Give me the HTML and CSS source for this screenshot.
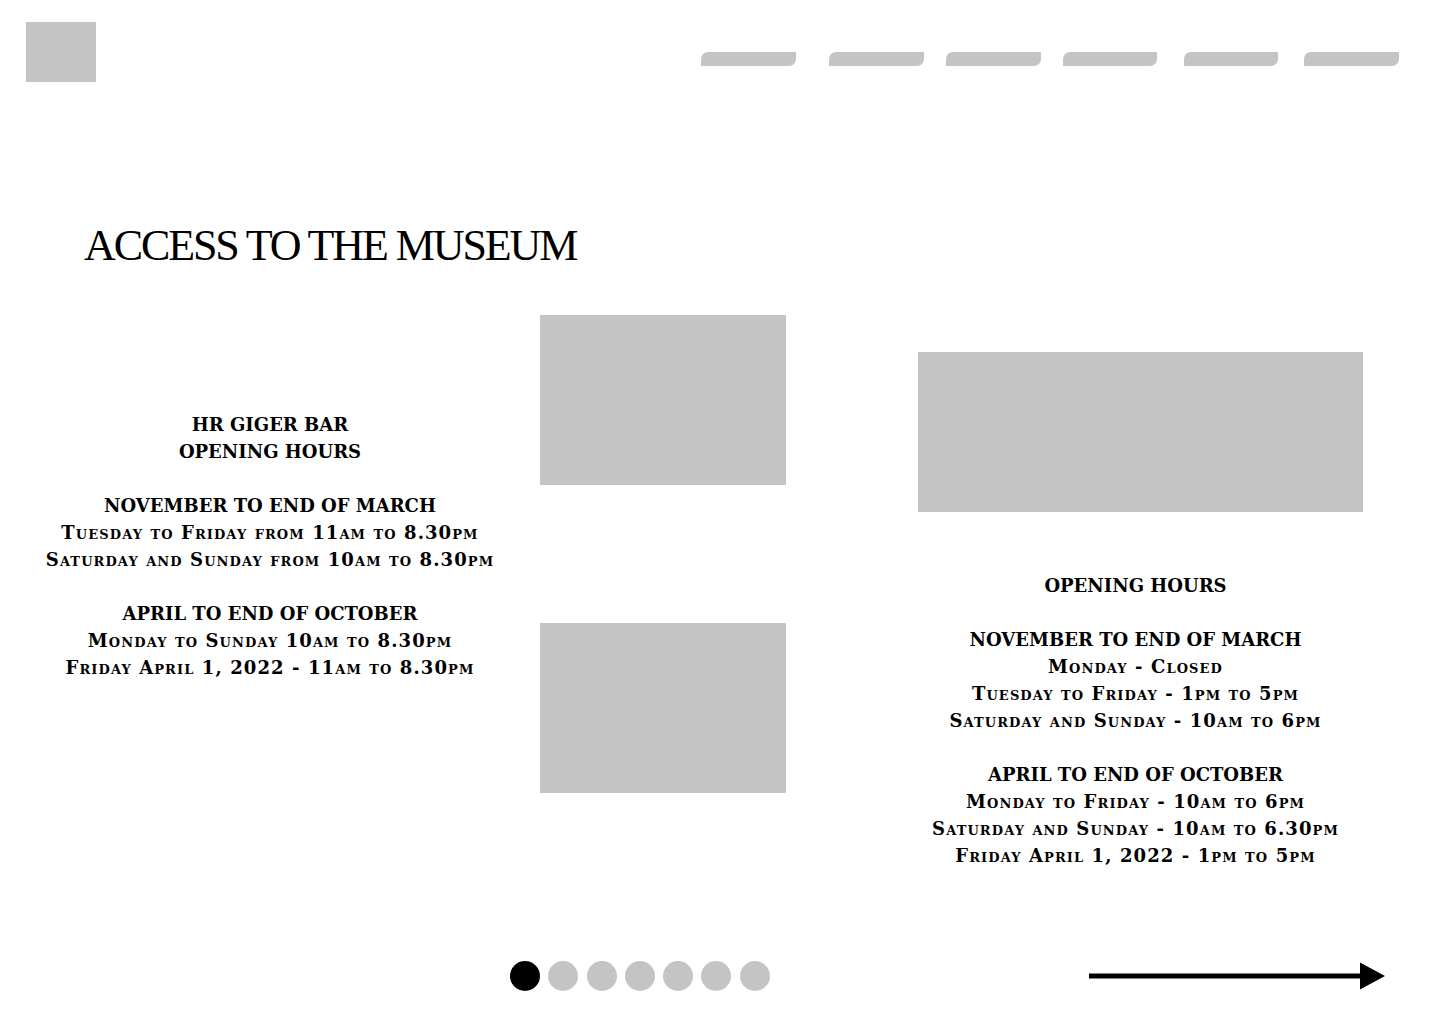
FILE: index.html
```html
<!DOCTYPE html>
<html lang="en">
<head>
<meta charset="utf-8">
<title>Access to the Museum</title>
<link rel="stylesheet" href="styles.css">
</head>
<body>
<header class="top">
  <div class="logo"></div>
  <nav class="nav">
    <span class="pill"></span>
    <span class="pill p2"></span>
    <span class="pill p3"></span>
    <span class="pill p4"></span>
    <span class="pill p5"></span>
    <span class="pill p6"></span>
  </nav>
</header>
<main class="main">
  <h1 class="title">ACCESS TO THE MUSEUM</h1>
  <div class="cols">
    <section class="col-left">
      <p class="hours"><span class="line">HR GIGER BAR</span><span class="line">OPENING HOURS</span></p>
      <p class="hours"><span class="line">NOVEMBER TO END OF MARCH</span><span class="line sc">Tuesday to Friday from 11am to 8.30pm</span><span class="line sc">Saturday and Sunday from 10am to 8.30pm</span></p>
      <p class="hours"><span class="line">APRIL TO END OF OCTOBER</span><span class="line sc">Monday to Sunday 10am to 8.30pm</span><span class="line sc">Friday April 1, 2022 - 11am to 8.30pm</span></p>
    </section>
    <section class="col-mid">
      <div class="ph ph-small"></div>
      <div class="ph ph-small"></div>
    </section>
    <section class="col-right">
      <div class="ph ph-wide"></div>
      <p class="hours"><span class="line">OPENING HOURS</span></p>
      <p class="hours"><span class="line">NOVEMBER TO END OF MARCH</span><span class="line sc">Monday - Closed</span><span class="line sc">Tuesday to Friday - 1pm to 5pm</span><span class="line sc">Saturday and Sunday - 10am to 6pm</span></p>
      <p class="hours"><span class="line">APRIL TO END OF OCTOBER</span><span class="line sc">Monday to Friday - 10am to 6pm</span><span class="line sc">Saturday and Sunday - 10am to 6.30pm</span><span class="line sc">Friday April 1, 2022 - 1pm to 5pm</span></p>
    </section>
  </div>
  <div class="foot">
    <div class="dots">
      <span class="dot active"></span>
      <span class="dot"></span>
      <span class="dot"></span>
      <span class="dot"></span>
      <span class="dot"></span>
      <span class="dot"></span>
      <span class="dot"></span>
    </div>
    <svg class="arrow" width="297" height="28" viewBox="0 0 297 28">
      <rect x="0" y="11.5" width="275" height="5" fill="#000"/>
      <polygon points="271,0.5 296,14 271,27.5" fill="#000"/>
    </svg>
  </div>
</main>
</body>
</html>
```

FILE: styles.css
```css
* { box-sizing: border-box; }

html, body {
  margin: 0;
  padding: 0;
  background: #ffffff;
}

body {
  width: 1440px;
  height: 1024px;
  overflow: hidden;
  font-family: "Liberation Serif", "Times New Roman", serif;
  color: #000;
}

.top {
  display: flex;
  justify-content: space-between;
  align-items: flex-start;
  padding: 22px 41px 0 26px;
}

.logo {
  width: 70px;
  height: 60px;
  background: #c4c4c4;
}

.nav {
  display: flex;
  margin-top: 30px;
}

.pill {
  width: 95px;
  height: 14px;
  background: #c4c4c4;
  border-radius: 7px 0 7px 0;
}

.p2 { margin-left: 33px; }
.p3 { margin-left: 22px; }
.p4 { margin-left: 22px; width: 94px; }
.p5 { margin-left: 27px; width: 94px; }
.p6 { margin-left: 26px; }

.main {
  display: flex;
  flex-direction: column;
}

.title {
  margin: 137px 0 0 84px;
  font-size: 44px;
  line-height: 54px;
  font-weight: 400;
  letter-spacing: -2.1px;
}

.cols {
  display: flex;
  align-items: flex-start;
  margin-top: 42px;
  padding-left: 30px;
}

.col-left {
  width: 480px;
  padding-top: 96px;
  text-align: center;
}

.col-mid {
  width: 246px;
  margin-left: 30px;
  display: flex;
  flex-direction: column;
  gap: 138px;
}

.col-right {
  width: 445px;
  margin-left: 132px;
  padding-top: 37px;
  text-align: center;
}

.ph {
  background: #c4c4c4;
}

.ph-small {
  width: 246px;
  height: 170px;
}

.ph-wide {
  width: 445px;
  height: 160px;
  margin-bottom: 60px;
}

.hours {
  margin: 0 0 27px 0;
  font-family: "DejaVu Serif", "Liberation Serif", serif;
  font-size: 18px;
  line-height: 27px;
  font-weight: 700;
  font-variant: small-caps;
  white-space: nowrap;
}

.line {
  display: block;
}

.line.sc {
  letter-spacing: 1.1px;
}

.col-right .hours {
  padding-right: 10px;
}

.hours:last-child {
  margin-bottom: 0;
}

.foot {
  display: flex;
  align-items: center;
  margin-top: 92px;
  padding: 0 54px 0 510px;
}

.dots {
  display: flex;
  gap: 8.3px;
}

.dot {
  width: 30px;
  height: 30px;
  border-radius: 50%;
  background: #c4c4c4;
}

.dot.active {
  background: #000;
}

.arrow {
  display: block;
  margin-left: auto;
}
```
